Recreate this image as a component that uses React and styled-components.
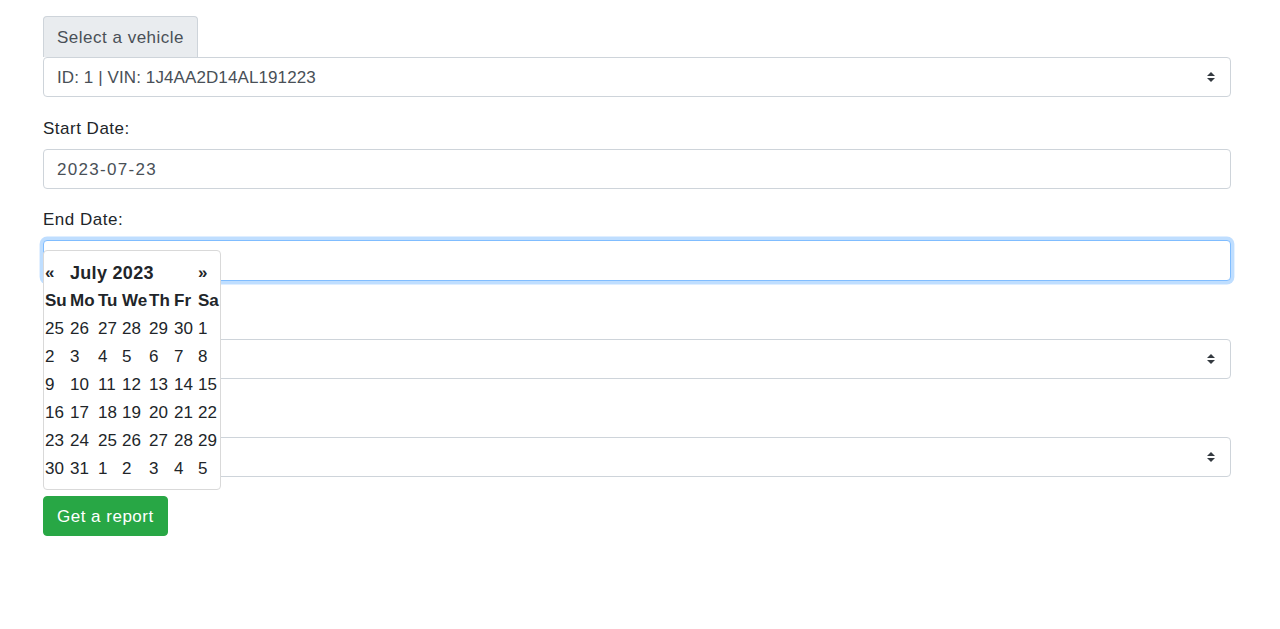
import styled, { createGlobalStyle, css } from 'styled-components';

const GlobalStyle = createGlobalStyle`
  *, *::before, *::after { box-sizing: border-box; }
  body {
    margin: 0;
    background: #fff;
    color: #212529;
    font-family: "Liberation Sans", Arial, Helvetica, sans-serif;
    font-size: 17px;
    line-height: 1.5;
  }
`;

const Page = styled.div`
  padding: 16px 49px 40px 43px;
`;

const Form = styled.form`
  display: flex;
  flex-direction: column;
`;

const FormGroup = styled.div`
  display: flex;
  flex-direction: column;
  align-items: flex-start;
  margin-bottom: ${(p) => p.$mb || 17}px;
`;

const PrependLabel = styled.span`
  display: inline-block;
  height: 41px;
  padding: 8px 13px 6px;
  color: #495057;
  letter-spacing: 0.5px;
  background: #e9ecef;
  border: 1px solid #ced4da;
  border-radius: 4px 4px 0 0;
  border-bottom: none;
`;

const Label = styled.label`
  display: block;
  height: 26.5px;
  padding-top: 1px;
  line-height: 25.5px;
  margin-bottom: 7.5px;
  letter-spacing: 0.5px;
`;

const field = css`
  display: block;
  width: 100%;
  height: 40px;
  padding: 7px 13px 5px;
  font: inherit;
  font-size: 17px;
  line-height: 1.5;
  color: #495057;
  background-color: #fff;
  border: 1px solid #ced4da;
  border-radius: 4px;
  outline: none;
`;

const Select = styled.select`
  ${field}
  appearance: none;
  -webkit-appearance: none;
  padding-right: 32px;
  letter-spacing: 0.1px;
  background-image: url("data:image/svg+xml,%3csvg xmlns='http://www.w3.org/2000/svg' width='4' height='5' viewBox='0 0 4 5'%3e%3cpath fill='%23343a40' d='M2 0L0 2h4zm0 5L0 3h4z'/%3e%3c/svg%3e");
  background-repeat: no-repeat;
  background-position: right 15px center;
  background-size: 8px 10px;
`;

const Input = styled.input`
  ${field}
  letter-spacing: 1.3px;
  ${(p) =>
    p.$focused &&
    css`
      height: 41px;
      border-color: #80bdff;
      box-shadow: 0 0 0 3.4px rgba(0, 123, 255, 0.25);
    `}
`;

const InputWrap = styled.div`
  position: relative;
  width: 100%;
`;

const Datepicker = styled.div`
  position: absolute;
  top: 10px;
  left: 0;
  z-index: 10;
  width: 178px;
  height: 240px;
  padding: 8px 1px 0 1px;
  background: #fff;
  border: 1px solid #d9d9d9;
  border-radius: 4px;
  color: #212529;
`;

const CalTable = styled.table`
  border-collapse: collapse;
  table-layout: fixed;
  width: 175px;
  font-size: 17px;

  td, th {
    padding: 0;
    height: 28px;
    text-align: left;
    white-space: nowrap;
    overflow: visible;
  }
  th { font-weight: 700; }
`;

const Title = styled.th`
  font-size: 18px;
  letter-spacing: 0.3px;
`;

const Arrow = styled.th`
  font-size: 17px;
`;

const SubmitButton = styled.button`
  align-self: flex-start;
  height: 40px;
  padding: 7px 13px 5px;
  font: inherit;
  font-size: 17px;
  letter-spacing: 0.5px;
  color: #fff;
  background: #28a745;
  border: 1px solid #28a745;
  border-radius: 4px;
  margin-top: 2px;
  cursor: pointer;
`;

const weeks = [
  [25, 26, 27, 28, 29, 30, 1],
  [2, 3, 4, 5, 6, 7, 8],
  [9, 10, 11, 12, 13, 14, 15],
  [16, 17, 18, 19, 20, 21, 22],
  [23, 24, 25, 26, 27, 28, 29],
  [30, 31, 1, 2, 3, 4, 5],
];

const colWidths = [25, 28, 24, 27, 25, 24, 22];

function Calendar() {
  return (
    <Datepicker>
      <CalTable>
        <colgroup>
          {colWidths.map((w, i) => (
            <col key={i} style={{ width: w }} />
          ))}
        </colgroup>
        <thead>
          <tr>
            <Arrow>«</Arrow>
            <Title colSpan={5}>July 2023</Title>
            <Arrow>»</Arrow>
          </tr>
          <tr>
            {['Su', 'Mo', 'Tu', 'We', 'Th', 'Fr', 'Sa'].map((d) => (
              <th key={d}>{d}</th>
            ))}
          </tr>
        </thead>
        <tbody>
          {weeks.map((w, i) => (
            <tr key={i}>
              {w.map((d, j) => (
                <td key={j}>{d}</td>
              ))}
            </tr>
          ))}
        </tbody>
      </CalTable>
    </Datepicker>
  );
}

export default function App() {
  return (
    <Page>
      <GlobalStyle />
      <Form onSubmit={(e) => e.preventDefault()}>
        <FormGroup $mb={18}>
          <PrependLabel>Select a vehicle</PrependLabel>
          <Select defaultValue="1">
            <option value="1">ID: 1 | VIN: 1J4AA2D14AL191223</option>
          </Select>
        </FormGroup>
        <FormGroup>
          <Label>Start Date:</Label>
          <Input type="text" defaultValue="2023-07-23" />
        </FormGroup>
        <FormGroup $mb={24}>
          <Label>End Date:</Label>
          <InputWrap>
            <Input type="text" $focused />
            <Calendar />
          </InputWrap>
        </FormGroup>
        {/* labels of these two selects sit under the open datepicker */}
        <FormGroup $mb={24}>
          <Label />
          <Select defaultValue="">
            <option value=""></option>
          </Select>
        </FormGroup>
        <FormGroup $mb={17}>
          <Label />
          <Select defaultValue="">
            <option value=""></option>
          </Select>
        </FormGroup>
        <SubmitButton type="submit">Get a report</SubmitButton>
      </Form>
    </Page>
  );
}
